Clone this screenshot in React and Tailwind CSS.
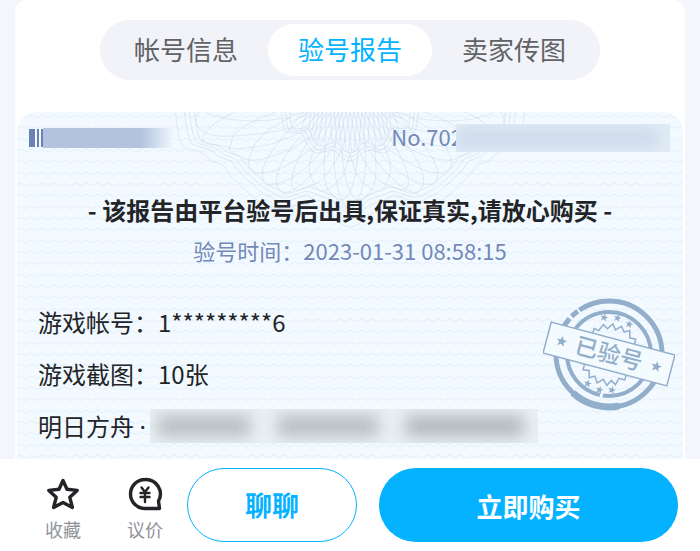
import { useState } from 'react';

const tabs = ['帐号信息', '验号报告', '卖家传图'];

const details = [
  { label: '游戏帐号：', value: '1*********6' },
  { label: '游戏截图：', value: '10张' },
];

// [angle, radius] pairs, measured from the horizontal down to the vertical axis
const outerEdge = [[0, 156], [15, 156], [22, 136], [29, 124], [44, 120], [54, 116], [67, 97], [78, 98], [90, 110]];
const innerEdge = [[0, 62], [14, 62], [27, 65], [36, 52], [56, 57], [72, 47], [90, 55]];

const radiusAt = (edge, deg) => {
  const a = deg > 90 ? 180 - deg : deg;
  if (a <= 0) return edge[0][1];
  const i = edge.findIndex(([angle]) => angle >= a);
  const [a0, r0] = edge[i - 1];
  const [a1, r1] = edge[i];
  const t = (1 - Math.cos(((a - a0) / (a1 - a0)) * Math.PI)) / 2;
  return r0 + (r1 - r0) * t;
};

const toPoint = (deg, r) => {
  const rad = (deg * Math.PI) / 180;
  return `${(190 + r * Math.cos(rad)).toFixed(1)} ${(r * Math.sin(rad) - 14).toFixed(1)}`;
};

const edgePath = (edge, offset) => {
  const points = [];
  for (let deg = 0; deg <= 180; deg += 2) {
    points.push(toPoint(deg, radiusAt(edge, deg) + offset));
  }
  return `M${points.join('L')}`;
};

const meshPath = (inner, outer, step, span) => {
  let d = '';
  for (let start = -span; start < 180; start += step) {
    const points = [];
    for (let i = 0; i <= 24; i++) {
      const u = i / 24;
      const deg = start + u * span;
      const r0 = radiusAt(inner, deg);
      const r1 = radiusAt(outer, deg);
      points.push(toPoint(deg, r0 + (r1 - r0) * Math.sin(u * Math.PI)));
    }
    d += `M${points.join('L')}`;
  }
  return d;
};

const fanPath = (edge) => {
  let d = '';
  for (let deg = 18; deg <= 162; deg += 6) {
    const top = `${(190 - (deg - 90) * 0.65).toFixed(1)} 0`;
    [-8, 8].forEach((skew) => {
      d += `M${top}L${toPoint(deg + skew, radiusAt(edge, deg + skew))}`;
    });
  }
  return d;
};

const ReportPattern = () => (
  <div className="absolute inset-0 overflow-hidden rounded-t-[20px]" aria-hidden="true">
    <svg className="absolute inset-0 w-full h-full">
      <defs>
        <pattern id="waves" width="11" height="34" patternUnits="userSpaceOnUse">
          <path
            d="M0 5Q2.75 1.5 5.5 4T11 5M0 16Q2.75 12.5 5.5 15T11 16M0 28Q2.75 24.5 5.5 27T11 28"
            fill="none"
            stroke="#e2eefb"
            strokeWidth="1"
          />
        </pattern>
      </defs>
      <rect width="100%" height="100%" fill="url(#waves)" />
    </svg>
    <svg
      className="absolute top-0 left-1/2 -translate-x-1/2 w-[380px] h-[140px]"
      viewBox="0 0 380 140"
      fill="none"
      stroke="#bdd0e8"
      strokeOpacity="0.5"
      strokeWidth="0.8"
    >
      <path d={meshPath(innerEdge, outerEdge, 9, 36)} />
      <path d={fanPath(innerEdge)} />
      {[0, 4, 8].map((offset) => (
        <path key={offset} d={edgePath(innerEdge, offset)} />
      ))}
      {[0, 5, 10, 19].map((offset) => (
        <path key={offset} d={edgePath(outerEdge, offset)} />
      ))}
    </svg>
  </div>
);

const star = 'M0-5L1.3-1.6L5-1.5L2.1 .7L3.1 4.3L0 2.2L-3.1 4.3L-2.1 .7L-5-1.5L-1.3-1.6Z';

const VerifiedStamp = () => (
  <svg className="w-[132px] h-[116px] shrink-0" viewBox="0 0 132 116" role="img" aria-label="已验号">
    <g fill="none" stroke="#93aecb">
      <circle cx="66" cy="58" r="53" strokeWidth="5" strokeDasharray="205 3 8 2 115" />
      <path d="M30 97A53 53 0 0 0 76 110" strokeWidth="7" />
      <circle cx="66" cy="58" r="42" strokeWidth="4" strokeDasharray="72 3 80 4 105" />
    </g>
    <g transform="rotate(14.9 66 58)">
      <g fill="none" stroke="#93aecb" strokeWidth="1.5">
        <path d="M45 42V37L50 38L53 31L58 34L62 28L66 33L71 28L75 33L80 30L82 37L88 37V42" />
        <path d="M45 74V80L51 79L53 86L58 83L62 89L67 84L72 89L75 83L80 86L82 79L88 79V74" />
      </g>
      <rect x="2" y="42" width="128" height="32" fill="#f3fbff" stroke="#93aecb" strokeWidth="1.5" />
      <g fill="#93aecb">
        <path d={star} transform="translate(17 58) scale(1.1)" />
        <path d={star} transform="translate(115 58) scale(1.1)" />
        <path d={star} transform="translate(52 24) scale(.8)" />
        <path d={star} transform="translate(65 21) scale(.8)" />
        <path d={star} transform="translate(78 24) scale(.8)" />
        <path d={star} transform="translate(53 92) scale(.8)" />
        <path d={star} transform="translate(66 95) scale(.8)" />
        <path d={star} transform="translate(78 92) scale(.8)" />
      </g>
      <text x="66" y="66" textAnchor="middle" fontSize="23" fontWeight="500" fill="#93aecb">
        已验号
      </text>
    </g>
  </svg>
);

const StarIcon = () => (
  <svg className="w-9 h-9" viewBox="0 0 36 36" fill="none" stroke="#222428" strokeWidth="3.4" strokeLinejoin="round">
    <path d="M18 4.5L22 13.3L32.2 14.4L24.8 21.3L27.4 31.5L18 26.6L8.6 31.5L11.2 21.3L3.8 14.4L14 13.3Z" />
  </svg>
);

const BargainIcon = () => (
  <svg className="w-9 h-9" viewBox="0 0 36 36" fill="none" stroke="#222428" strokeLinejoin="round" strokeLinecap="round">
    <path d="M18 3.5A14.5 14.5 0 0 0 18 32.5H32.5L31.5 25A14.5 14.5 0 0 0 18 3.5Z" strokeWidth="3.4" />
    <path d="M14.5 11.5L18 16L21.5 11.5M13.5 17H22.5M13.5 21H22.5M18 16V26" strokeWidth="2.4" />
  </svg>
);

const App = () => {
  const [activeTab, setActiveTab] = useState(1);

  return (
    <div className="bg-[#f5f6fb] w-full font-['Noto_Sans_CJK_SC',sans-serif] text-[#222428]">
      <main className="mx-[15px] bg-white rounded-t-xl px-[2px] pt-5">
        <div role="tablist" className="mx-auto w-[500px] max-w-full h-[60px] p-1 flex justify-between rounded-full bg-[#f2f3f8]">
          {tabs.map((tab, index) => (
            <button
              key={tab}
              type="button"
              role="tab"
              aria-selected={index === activeTab}
              onClick={() => setActiveTab(index)}
              className={`flex-1 rounded-full text-[26px] leading-[50px] pb-[2px] ${
                index === activeTab ? 'bg-white text-[#05b2ff]' : 'text-[#606266]'
              }`}
            >
              {tab}
            </button>
          ))}
        </div>

        <section className="relative mt-8 rounded-t-[20px] bg-[#f2faff] pb-[7px]">
          <ReportPattern />
          <div className="relative">
            <div className="flex justify-between items-center pt-3 pl-3 pr-[13px] h-10">
              <div className="flex items-center h-5">
                <div className="flex gap-[2px] h-[18px]">
                  <span className="w-[6px] bg-[#6a83b3]"></span>
                  <span className="w-[2px] bg-[#6a83b3]"></span>
                  <span className="w-[2px] bg-[#6a83b3]"></span>
                </div>
                <span className="w-[130px] h-5 bg-linear-to-r from-[#b4c3dd] via-[#b4c3dd] via-75% to-[#eef7fd]"></span>
              </div>
              <div className="flex items-center">
                <span className="text-[22px] leading-6 pb-1 text-[#7389b8]">No.702</span>
                <span className="-ml-[7px] w-[214px] h-7 z-10 bg-[#e0ebf6] overflow-hidden">
                  <span className="block h-5 mt-1 mr-3 bg-[#cfdcec] blur-[6px]"></span>
                </span>
              </div>
            </div>

            <h1 className="mt-[38px] text-center text-2xl leading-10 font-bold">
              - 该报告由平台验号后出具,保证真实,请放心购买 -
            </h1>
            <p className="text-center text-[22px] leading-10 text-[#7389b8]">验号时间：2023-01-31 08:58:15</p>

            <div className="mt-[26px] flex justify-between pl-[21px] pr-2">
              <dl className="text-2xl leading-[52px]">
                {details.map(({ label, value }) => (
                  <div key={label} className="flex">
                    <dt>{label}</dt>
                    <dd>{value}</dd>
                  </div>
                ))}
                <div className="flex items-center h-[52px]">
                  <dt className="shrink-0 whitespace-nowrap">
                    明日方舟 <span className="font-['Noto_Sans',sans-serif]">·</span>
                  </dt>
                  <dd className="ml-1 w-[388px] h-[34px] flex items-center gap-7 px-2 overflow-hidden bg-[#e8f0f4]">
                    <span className="w-[92px] h-5 bg-[#b5babe] blur-[8px]"></span>
                    <span className="w-[100px] h-5 bg-[#b5babe] blur-[8px]"></span>
                    <span className="w-[118px] h-5 bg-[#b0b5b9] blur-[8px]"></span>
                  </dd>
                </div>
              </dl>
              <VerifiedStamp />
            </div>
          </div>
        </section>
      </main>

      <footer className="bg-white flex items-center py-[9px] pl-6 pr-[22px]">
        <button type="button" className="w-[78px] h-[74px] pt-2 flex flex-col items-center gap-1 text-lg leading-[26px] text-[#909399]">
          <StarIcon />
          收藏
        </button>
        <button type="button" className="ml-1 w-[78px] h-[74px] pt-2 flex flex-col items-center gap-1 text-lg leading-[26px] text-[#909399]">
          <BargainIcon />
          议价
        </button>
        <button type="button" className="ml-[3px] w-[170px] h-[74px] rounded-full border border-[#05b2ff] text-[27px] font-bold text-[#05b2ff]">
          聊聊
        </button>
        <button type="button" className="ml-[22px] flex-1 h-[74px] rounded-full bg-[#05b2ff] text-[26px] font-bold text-white">
          立即购买
        </button>
      </footer>
    </div>
  );
};

export default App;
